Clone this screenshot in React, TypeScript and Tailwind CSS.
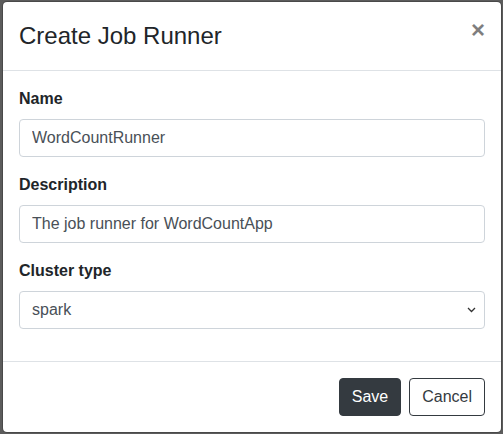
import React from 'react';

const fieldClass =
  'block w-full h-[38px] px-3 py-1.5 text-base leading-6 text-[#495057] bg-white border border-[#ced4da] rounded outline-none';

const FormGroup: React.FC<{ label: string; children: React.ReactNode }> = ({ label, children }) => (
  <div className="mb-4">
    <label className="block mb-2 text-base leading-6 font-bold text-[#212529]">{label}</label>
    {children}
  </div>
);

export default function App() {
  return (
    <div
      className="h-[434px] w-[503px] overflow-hidden bg-[#5c5c5c] pt-px pl-[2px]"
      style={{ fontFamily: '"Liberation Sans", Arial, sans-serif' }}
    >
      {/* Modal */}
      <div className="w-[500px] bg-white bg-clip-padding border border-black/20 rounded-[5px] flex flex-col">
        {/* Header */}
        <div className="flex items-start justify-between p-4 border-b border-[#dee2e6]">
          <h4 className="m-0 text-2xl leading-9 font-normal text-[#212529]">Create Job Runner</h4>
          <button
            type="button"
            className="-m-4 ml-auto p-4 text-2xl leading-none font-bold text-black opacity-50 [text-shadow:0_1px_0_#fff]"
          >
            ×
          </button>
        </div>

        {/* Body */}
        <div className="p-4">
          <FormGroup label="Name">
            <input className={fieldClass} defaultValue="WordCountRunner" />
          </FormGroup>
          <FormGroup label="Description">
            <input className={fieldClass} defaultValue="The job runner for WordCountApp" />
          </FormGroup>
          <FormGroup label="Cluster type">
            <div className="relative">
              <select className={`${fieldClass} appearance-none pr-8`} defaultValue="spark">
                <option value="spark">spark</option>
                <option value="flink">flink</option>
              </select>
              <svg
                className="pointer-events-none absolute right-[9px] top-[16px]"
                width="9"
                height="6"
                viewBox="0 0 9 6"
                fill="none"
              >
                <path d="M1 1l3.5 3.5L8 1" stroke="#333" strokeWidth="1.3" />
              </svg>
            </div>
          </FormGroup>
        </div>

        {/* Footer */}
        <div className="flex items-center justify-end p-3 border-t border-[#dee2e6]">
          <button
            type="button"
            className="m-1 px-3 py-1.5 text-base leading-6 text-white bg-[#343a40] border border-[#343a40] rounded"
          >
            Save
          </button>
          <button
            type="button"
            className="m-1 px-3 py-1.5 text-base leading-6 text-[#343a40] bg-transparent border border-[#343a40] rounded"
          >
            Cancel
          </button>
        </div>
      </div>
    </div>
  );
}
